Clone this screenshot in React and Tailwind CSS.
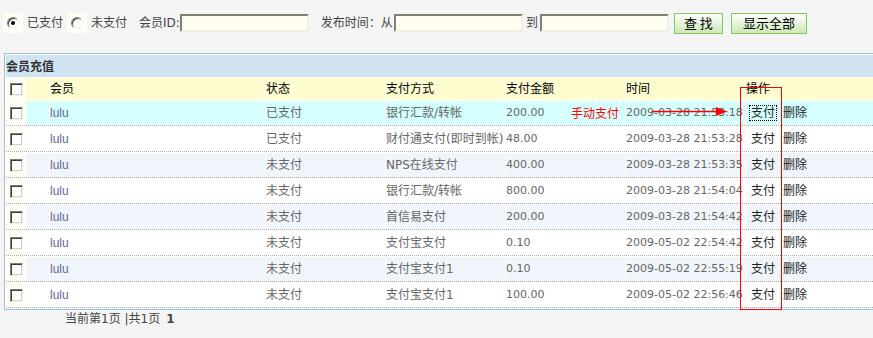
import React from "react";

const rows = [
  ["lulu", "已支付", "银行汇款/转帐", "200.00", "2009-03-28 21:53:18"],
  ["lulu", "已支付", "财付通支付(即时到帐)", "48.00", "2009-03-28 21:53:28"],
  ["lulu", "未支付", "NPS在线支付", "400.00", "2009-03-28 21:53:35"],
  ["lulu", "未支付", "银行汇款/转帐", "800.00", "2009-03-28 21:54:04"],
  ["lulu", "未支付", "首信易支付", "200.00", "2009-03-28 21:54:42"],
  ["lulu", "未支付", "支付宝支付", "0.10", "2009-05-02 22:54:42"],
  ["lulu", "未支付", "支付宝支付1", "0.10", "2009-05-02 22:55:19"],
  ["lulu", "未支付", "支付宝支付1", "100.00", "2009-05-02 22:56:46"],
];

function Check() {
  return (
    <span className="block w-[13px] h-[13px] bg-white border border-t-[#808080] border-l-[#808080] border-b-[#f4f4ee] border-r-[#f4f4ee] shadow-[inset_1px_1px_0_#404040,inset_-1px_-1px_0_#d4d0c8]" />
  );
}

function Radio({ checked }) {
  return (
    <span className="flex w-[20px] h-[20px] bg-[#fefef2] items-center justify-center">
      <span className="relative flex w-[12px] h-[12px] rounded-full bg-white border border-t-[#808080] border-l-[#808080] border-b-[#eeeeee] border-r-[#eeeeee] items-center justify-center shadow-[inset_1px_1px_0_#404040]">
        {checked ? <span className="block w-[4px] h-[4px] rounded-full bg-black" /> : null}
      </span>
    </span>
  );
}

function Input() {
  return (
    <span className="block w-[129px] h-[18px] bg-[#fffdf0] border-2 border-t-[#807f70] border-l-[#807f70] border-b-[#f0efe6] border-r-[#f0efe6]" />
  );
}

function Btn({ children, w }) {
  return (
    <span
      className={`flex ${w} h-[21px] items-center justify-center border border-[#84c65e] bg-gradient-to-b from-white to-[#cbe7b5] text-[13px] text-black font-['Noto_Sans_CJK_SC',sans-serif]`}
    >
      {children}
    </span>
  );
}

function DataRow({ r, i }) {
  const bg = i === 0 ? "bg-[#d5ffff]" : i % 2 === 0 ? "bg-[#eff5fa]" : "bg-white";
  return (
    <div className="flex h-[25px] gap-px border-b border-dotted border-[#aaaaaa]">
      <div className={`flex w-[43px] ${bg}`}>
        <div className="flex w-[20px] h-full bg-[#fefef2] items-center justify-center">
          <Check />
        </div>
      </div>
      <div className={`flex w-[215px] items-center ${bg} text-[12px] text-[#666699] font-['Liberation_Sans',sans-serif]`}>
        {r[0]}
      </div>
      <div className={`flex w-[119px] items-center ${bg} text-[#666]`}>{r[1]}</div>
      <div className={`flex w-[119px] items-center whitespace-nowrap ${bg} text-[#666]`}>{r[2]}</div>
      <div className={`flex w-[119px] items-center ${bg} text-[11px] text-[#666]`}>{r[3]}</div>
      <div className={`flex w-[119px] items-center whitespace-nowrap ${bg} text-[11px] text-[#666]`}>{r[4]}</div>
      <div className={`flex flex-1 items-center ${bg} text-[#222]`}>
        <span
          className={`ml-[3px] px-px leading-[14px] border border-dotted ${i === 0 ? "border-black" : "border-transparent"}`}
        >
          支付
        </span>
        <span className="ml-[6px]">删除</span>
      </div>
    </div>
  );
}

export default function App() {
  return (
    <div className="relative w-[873px] h-[338px] overflow-hidden bg-[#f4f4f4] text-[12px] text-[#555] font-['DejaVu_Sans','Noto_Sans_CJK_SC',sans-serif]">
      {/* filter bar */}
      <div className="flex h-[22px] mt-[12px] items-center whitespace-nowrap">
        <span className="ml-[3px]">
          <Radio checked />
        </span>
        <span className="ml-[4px] text-[#444]">已支付</span>
        <span className="ml-[4px]">
          <Radio />
        </span>
        <span className="ml-[4px] text-[#444]">未支付</span>
        <span className="ml-[12px] text-[#444]">会员ID:</span>
        <Input />
        <span className="ml-[12px] text-[#444]">发布时间：从</span>
        <span className="ml-px">
          <Input />
        </span>
        <span className="ml-[3px] text-[#444]">到</span>
        <span className="ml-[2px]">
          <Input />
        </span>
        <span className="ml-[5px]">
          <Btn w="w-[49px]">查&nbsp;找</Btn>
        </span>
        <span className="ml-[8px]">
          <Btn w="w-[76px]">显示全部</Btn>
        </span>
      </div>

      {/* table */}
      <div className="ml-[4px] mt-[19px] flex flex-col gap-px pt-px pl-px pb-px bg-white border-l border-t border-b border-[#96c3da]">
        <div className="flex h-[22px] items-center bg-[#cfe4f0] font-bold text-[#333] font-['Noto_Sans_CJK_SC',sans-serif]">
          会员充值
        </div>
        <div className="flex h-[22px] gap-px text-black">
          <div className="flex w-[43px] bg-[#fffccf]">
            <div className="flex w-[20px] h-full bg-[#fefef2] items-center justify-center">
              <Check />
            </div>
          </div>
          <div className="flex w-[215px] items-center bg-[#fffccf]">会员</div>
          <div className="flex w-[119px] items-center bg-[#fffccf]">状态</div>
          <div className="flex w-[119px] items-center bg-[#fffccf]">支付方式</div>
          <div className="flex w-[119px] items-center bg-[#fffccf]">支付金额</div>
          <div className="flex w-[119px] items-center bg-[#fffccf]">时间</div>
          <div className="flex flex-1 items-center bg-[#fffccf]">操作</div>
        </div>
        {rows.map((r, i) => (
          <DataRow key={i} r={r} i={i} />
        ))}
      </div>

      {/* pagination */}
      <div className="flex h-[17px] items-center pl-[65px] text-[#444] whitespace-nowrap">
        <span>当前第1页 |共1页</span>
        <span className="ml-[6px] font-bold">1</span>
      </div>

      {/* annotations */}
      <span className="absolute left-[571px] top-[105px] text-[12px] leading-[16px] text-[#ff0000] font-['Noto_Sans_CJK_SC',sans-serif]">
        手动支付
      </span>
      <svg className="absolute left-[650px] top-[105px]" width="80" height="14" viewBox="0 0 80 14">
        <line x1="2" y1="6.5" x2="68" y2="6.5" stroke="#ff0000" strokeWidth="1.5" />
        <polygon points="66,2 77,6.5 66,11" fill="#ff0000" />
      </svg>
      <div className="absolute left-[740px] top-[87px] w-[42px] h-[223px] border border-[#ff0000]" />
    </div>
  );
}
